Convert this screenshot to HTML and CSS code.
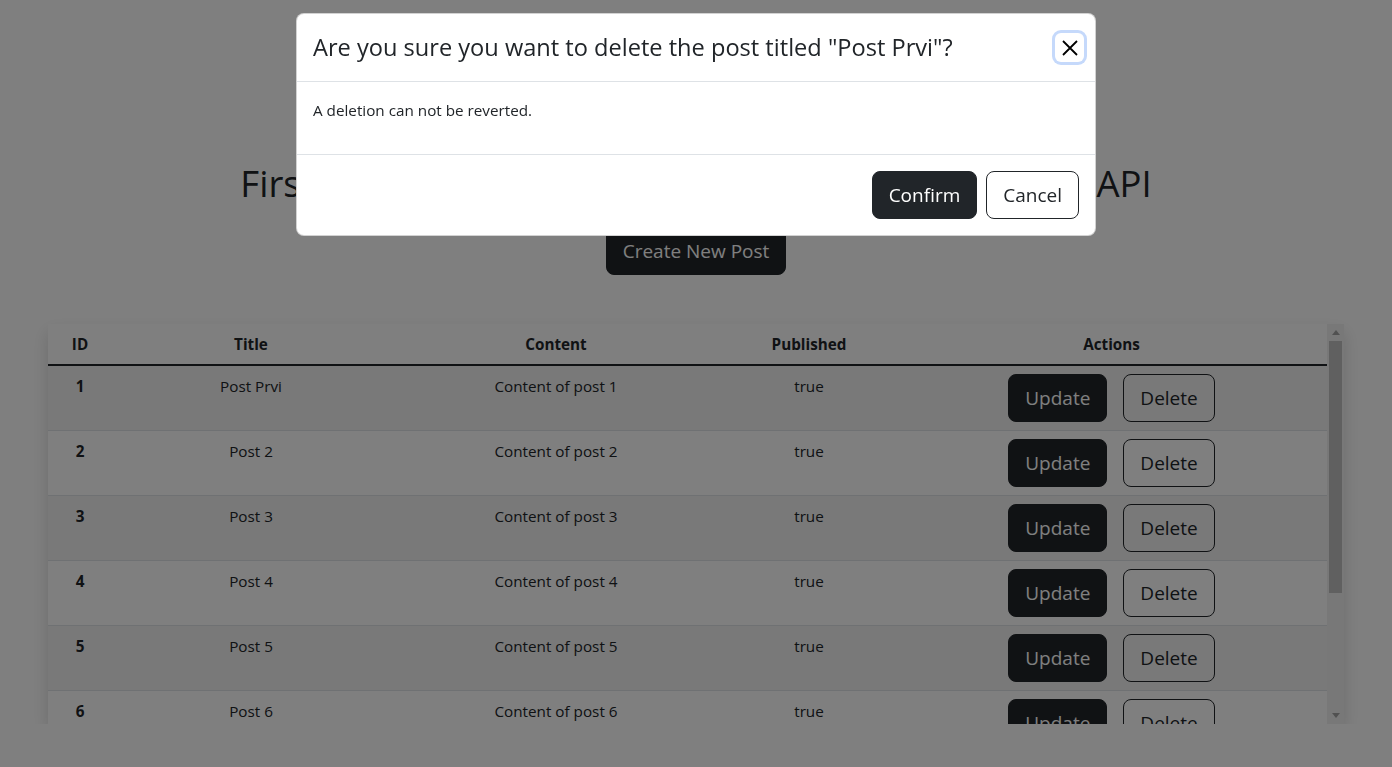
FILE: index.html
```html
<!DOCTYPE html>
<html lang="en">
<head>
<meta charset="utf-8">
<title>Posts</title>
<link rel="stylesheet" href="styles.css">
</head>
<body>
<div class="container">
  <h1 class="page-title">First Web Application with Spring Boot and a REST API</h1>
  <div class="create-row"><button class="btn btn-dark">Create New Post</button></div>
  <div class="table-wrap">
    <div class="table-scroll">
      <table class="posts">
        <colgroup>
          <col class="c-id"><col class="c-title"><col class="c-content"><col class="c-pub"><col class="c-act">
        </colgroup>
        <thead>
          <tr><th>ID</th><th>Title</th><th>Content</th><th>Published</th><th>Actions</th></tr>
        </thead>
        <tbody>
          <tr><th>1</th><td>Post Prvi</td><td>Content of post 1</td><td>true</td><td><div class="actions"><button class="btn btn-dark">Update</button><button class="btn btn-outline">Delete</button></div></td></tr>
          <tr><th>2</th><td>Post 2</td><td>Content of post 2</td><td>true</td><td><div class="actions"><button class="btn btn-dark">Update</button><button class="btn btn-outline">Delete</button></div></td></tr>
          <tr><th>3</th><td>Post 3</td><td>Content of post 3</td><td>true</td><td><div class="actions"><button class="btn btn-dark">Update</button><button class="btn btn-outline">Delete</button></div></td></tr>
          <tr><th>4</th><td>Post 4</td><td>Content of post 4</td><td>true</td><td><div class="actions"><button class="btn btn-dark">Update</button><button class="btn btn-outline">Delete</button></div></td></tr>
          <tr><th>5</th><td>Post 5</td><td>Content of post 5</td><td>true</td><td><div class="actions"><button class="btn btn-dark">Update</button><button class="btn btn-outline">Delete</button></div></td></tr>
          <tr><th>6</th><td>Post 6</td><td>Content of post 6</td><td>true</td><td><div class="actions"><button class="btn btn-dark">Update</button><button class="btn btn-outline">Delete</button></div></td></tr>
          <tr><th>7</th><td>Post 7</td><td>Content of post 7</td><td>true</td><td><div class="actions"><button class="btn btn-dark">Update</button><button class="btn btn-outline">Delete</button></div></td></tr>
          <tr><th>8</th><td>Post 8</td><td>Content of post 8</td><td>true</td><td><div class="actions"><button class="btn btn-dark">Update</button><button class="btn btn-outline">Delete</button></div></td></tr>
        </tbody>
      </table>
    </div>
    <div class="scrollbar" aria-hidden="true">
      <div class="sb-btn"><svg width="8" height="5" viewBox="0 0 8 5"><polygon points="0,5 8,5 4,0" fill="#a3a3a3"/></svg></div>
      <div class="sb-track"><div class="sb-thumb"></div></div>
      <div class="sb-btn"><svg width="8" height="5" viewBox="0 0 8 5"><polygon points="0,0 8,0 4,5" fill="#a3a3a3"/></svg></div>
    </div>
  </div>
</div>

<div class="backdrop"></div>

<div class="modal">
  <div class="modal-dialog">
    <div class="modal-content">
      <div class="modal-header">
        <h4 class="modal-title">Are you sure you want to delete the post titled "Post Prvi"?</h4>
        <button class="btn-close" aria-label="Close">
          <svg width="16" height="16" viewBox="0 0 16 16"><path d="M1 1 L15 15 M15 1 L1 15" stroke="#000" stroke-width="1.8" fill="none"/></svg>
        </button>
      </div>
      <div class="modal-body">
        <p>A deletion can not be reverted.</p>
      </div>
      <div class="modal-footer">
        <button class="btn btn-dark">Confirm</button>
        <button class="btn btn-outline">Cancel</button>
      </div>
    </div>
  </div>
</div>
</body>
</html>
```

FILE: styles.css
```css
* { box-sizing: border-box; }

body {
  margin: 0;
  font-family: "Open Sans", "Liberation Sans", sans-serif;
  font-size: 15.25px;
  line-height: 24px;
  color: #212529;
  background: #fff;
}

.container {
  width: 1320px;
  margin: 0 auto;
  padding: 161px 12px 0;
}

.page-title {
  margin: 0 0 22px;
  font-size: 36.5px;
  font-weight: 500;
  line-height: 44px;
  text-align: center;
}

.create-row {
  text-align: center;
  margin-bottom: 49px;
}

.btn {
  font-family: inherit;
  font-size: 19px;
  line-height: 30px;
  padding: 8px 16px;
  border: 1px solid #212529;
  border-radius: 8px;
  cursor: pointer;
}

.btn-dark {
  background: #212529;
  color: #fff;
}

.btn-outline {
  background: transparent;
  color: #212529;
}

.table-wrap {
  display: flex;
  height: 400px;
  box-shadow: 0 8px 16px rgba(0, 0, 0, 0.15);
}

.table-scroll {
  flex: 1;
  overflow: hidden;
}

.posts {
  width: 100%;
  border-collapse: collapse;
  table-layout: fixed;
  margin-bottom: 16px;
}

.c-id { width: 64px; }
.c-title { width: 278px; }
.c-content { width: 332px; }
.c-pub { width: 174px; }
.c-act { width: 431px; }

.posts th,
.posts td {
  padding: 8px;
  text-align: center;
  vertical-align: top;
  border-bottom: 1px solid #dee2e6;
}

.posts th { font-weight: 700; }

.posts thead th {
  border-bottom: 2px solid #212529;
}

.posts tbody tr:nth-child(odd) > * {
  background: rgba(0, 0, 0, 0.05);
}

.actions {
  display: flex;
  justify-content: center;
  gap: 16px;
}

.scrollbar {
  width: 17px;
  display: flex;
  flex-direction: column;
  background: #f1f1f1;
}

.sb-btn {
  height: 17px;
  display: flex;
  align-items: center;
  justify-content: center;
}

.sb-track {
  flex: 1;
  padding: 0 2px;
}

.sb-thumb {
  height: 252px;
  background: #c1c1c1;
}

.backdrop {
  position: fixed;
  inset: 0;
  background: #000;
  opacity: 0.5;
}

.modal {
  position: fixed;
  inset: 0;
  display: flex;
  justify-content: center;
  align-items: flex-start;
  padding-top: 13px;
}

.modal-dialog { width: 800px; }

.modal-content {
  background: #fff;
  border: 1px solid rgba(0, 0, 0, 0.175);
  border-radius: 8px;
}

.modal-header {
  display: flex;
  align-items: center;
  padding: 16px;
  border-bottom: 1px solid #dee2e6;
}

.modal-title {
  margin: 0;
  font-size: 23.6px;
  font-weight: 500;
  line-height: 35px;
}

.btn-close {
  margin: -8px -5px -8px auto;
  width: 29px;
  height: 29px;
  padding: 0;
  display: flex;
  align-items: center;
  justify-content: center;
  background: #fff;
  border: 0;
  border-radius: 6px;
  box-shadow: 0 0 0 3px #c5d9fb;
}

.modal-body { padding: 16px; }
.modal-body p { margin: 0 0 16px; }

.modal-footer {
  display: flex;
  justify-content: flex-end;
  gap: 9px;
  padding: 16px;
  border-top: 1px solid #dee2e6;
}
```
